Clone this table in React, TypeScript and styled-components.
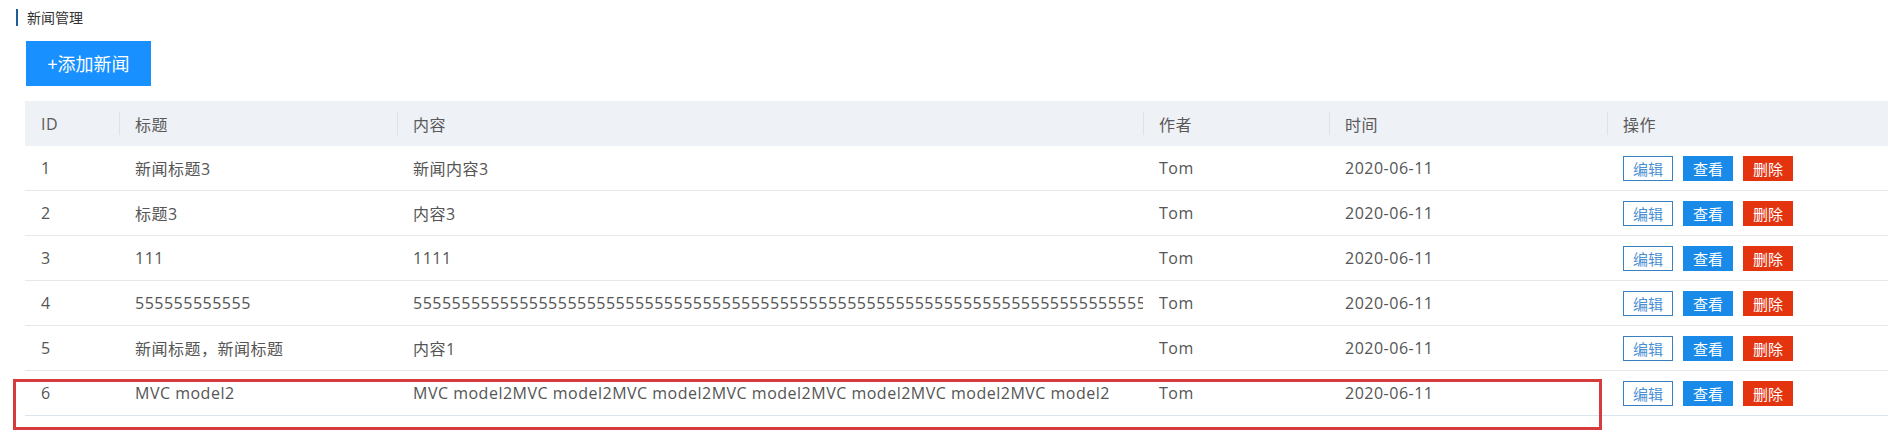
import React from "react";
import styled, { createGlobalStyle } from "styled-components";

const GlobalStyle = createGlobalStyle`
  html, body { margin: 0; padding: 0; background: #fff; }
  body {
    min-height: 441px;
    font-family: "Open Sans", "Noto Sans CJK SC", "Microsoft YaHei", sans-serif;
    color: #555;
  }
`;

const Page = styled.div`
  padding: 9px 0 11px;
`;

const Title = styled.div`
  margin-left: 16px;
  height: 17px;
  display: flex;
  align-items: center;
  border-left: 2px solid #1f5d98;
  padding-left: 9px;
  font-family: "Noto Sans CJK SC", sans-serif;
  font-size: 14px;
  line-height: 17px;
  color: #333;
`;

const Content = styled.div`
  padding: 15px 11px 0 25px;
  display: flex;
  flex-direction: column;
  align-items: flex-start;
  gap: 15px;
`;

const AddButton = styled.button`
  margin-left: 1px;
  width: 125px;
  height: 45px;
  border: none;
  background: #1890ff;
  color: #fff;
  font-family: "Noto Sans CJK SC", sans-serif;
  font-size: 18px;
  line-height: 45px;
  padding: 0;
  cursor: pointer;
`;

const TableWrap = styled.div`
  position: relative;
  width: 1863px;
  padding-bottom: 14px;
`;

const Table = styled.table`
  width: 1863px;
  table-layout: fixed;
  border-collapse: collapse;
  font-size: 16px;
  letter-spacing: 0.5px;
`;

const Th = styled.th<{ $sep?: boolean }>`
  position: relative;
  height: 45px;
  padding: 0 16px;
  background: #eef1f6;
  text-align: left;
  font-weight: normal;
  color: #5a5a5a;
  white-space: nowrap;
  &::before {
    content: "";
    display: ${(p) => (p.$sep ? "block" : "none")};
    position: absolute;
    left: 0;
    top: 11px;
    width: 1px;
    height: 23px;
    background: #dde2e8;
  }
`;

const Tr = styled.tr<{ $last?: boolean }>`
  border-bottom: 1px solid ${(p) => (p.$last ? "#d9e6f2" : "#e8e8e8")};
`;

const Td = styled.td`
  height: 44px;
  padding: 0 16px;
  white-space: nowrap;
  overflow: hidden;
  color: #555;
`;

const ClipTd = styled(Td)`
  text-overflow: clip;
  padding-right: 0;
`;

const Ops = styled.div`
  display: flex;
  gap: 10px;
  align-items: center;
`;

const OpButton = styled.button<{ $variant: "edit" | "view" | "del" }>`
  width: 50px;
  height: 25px;
  padding: 0;
  font-family: "Noto Sans CJK SC", sans-serif;
  font-size: 15px;
  letter-spacing: 0;
  line-height: 23px;
  cursor: pointer;
  border: 1px solid
    ${(p) => (p.$variant === "edit" ? "#3a7fc0" : p.$variant === "view" ? "#1a8ae8" : "#e4330f")};
  background: ${(p) => (p.$variant === "edit" ? "#fff" : p.$variant === "view" ? "#1a8ae8" : "#e4330f")};
  color: ${(p) => (p.$variant === "edit" ? "#4a8fd4" : "#fff")};
`;

const Highlight = styled.div`
  position: absolute;
  left: -12px;
  top: 278px;
  width: 1589px;
  height: 51px;
  box-sizing: border-box;
  border: 3px solid #d63b3d;
  pointer-events: none;
`;

type Row = { id: number; title: string; content: string; author: string; time: string };

const rows: Row[] = [
  { id: 1, title: "新闻标题3", content: "新闻内容3", author: "Tom", time: "2020-06-11" },
  { id: 2, title: "标题3", content: "内容3", author: "Tom", time: "2020-06-11" },
  { id: 3, title: "111", content: "1111", author: "Tom", time: "2020-06-11" },
  { id: 4, title: "555555555555", content: "5".repeat(120), author: "Tom", time: "2020-06-11" },
  { id: 5, title: "新闻标题，新闻标题", content: "内容1", author: "Tom", time: "2020-06-11" },
  { id: 6, title: "MVC model2", content: "MVC model2".repeat(7), author: "Tom", time: "2020-06-11" },
];

const cols = [94, 278, 746, 186, 278, 281];
const heads = ["ID", "标题", "内容", "作者", "时间", "操作"];

export default function App() {
  return (
    <>
      <GlobalStyle />
      <Page>
        <Title>新闻管理</Title>
        <Content>
          <AddButton>+添加新闻</AddButton>
          <TableWrap>
            <Table>
              <colgroup>
                {cols.map((w, i) => (
                  <col key={i} style={{ width: w }} />
                ))}
              </colgroup>
              <thead>
                <tr>
                  {heads.map((h, i) => (
                    <Th key={h} $sep={i > 0}>
                      {h}
                    </Th>
                  ))}
                </tr>
              </thead>
              <tbody>
                {rows.map((r, i) => (
                  <Tr key={r.id} $last={i === rows.length - 1}>
                    <Td>{r.id}</Td>
                    <Td>{r.title}</Td>
                    <ClipTd>{r.content}</ClipTd>
                    <Td>{r.author}</Td>
                    <Td>{r.time}</Td>
                    <Td>
                      <Ops>
                        <OpButton $variant="edit">编辑</OpButton>
                        <OpButton $variant="view">查看</OpButton>
                        <OpButton $variant="del">删除</OpButton>
                      </Ops>
                    </Td>
                  </Tr>
                ))}
              </tbody>
            </Table>
            <Highlight />
          </TableWrap>
        </Content>
      </Page>
    </>
  );
}
